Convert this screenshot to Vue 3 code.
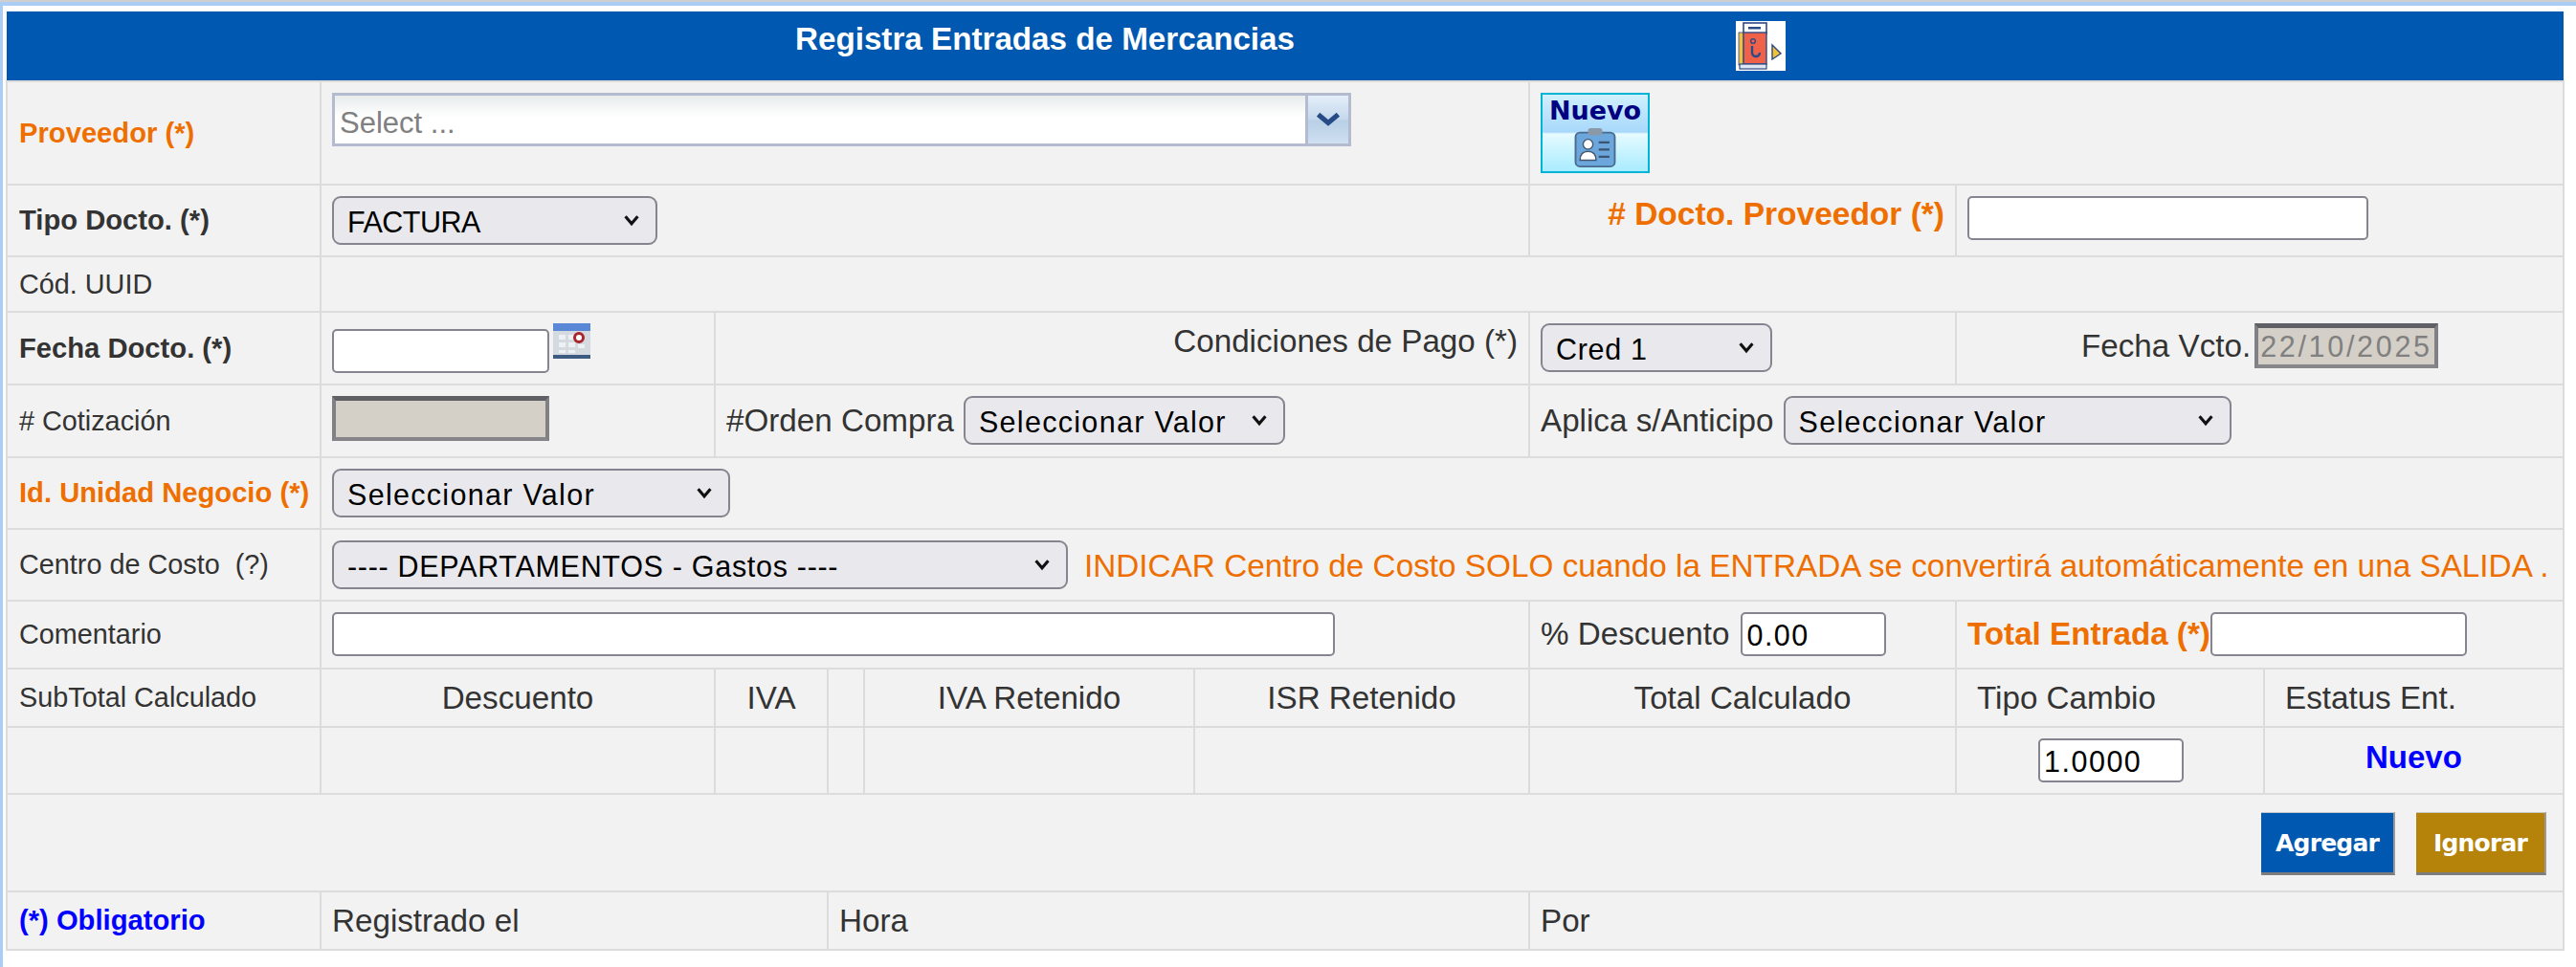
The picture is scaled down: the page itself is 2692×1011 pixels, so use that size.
<script setup>
const cols = [328, 412, 118, 38, 345, 350, 446, 322, 313]
</script>

<template>
  <div class="page">
    <div class="header">
      <span class="title">Registra Entradas de Mercancias</span>
      <svg class="doc-icon" viewBox="0 0 52 52" width="52" height="52">
        <rect width="52" height="52" fill="#fff" />
        <rect x="8" y="2" width="24" height="11" fill="#fff" stroke="#2b4a86" stroke-width="1.6" />
        <rect x="13" y="6" width="13" height="2.5" fill="#2b4a86" />
        <rect x="3" y="12" width="5" height="34" fill="#f0c040" stroke="#2b4a86" stroke-width="0.8" />
        <rect x="8" y="12" width="24" height="33" fill="#f0614a" stroke="#2b4a86" stroke-width="1.4" />
        <circle cx="18" cy="21" r="2.4" fill="none" stroke="#2b4a86" stroke-width="1.4" />
        <path d="M17 26v7a4 4 0 0 0 8 0" fill="none" stroke="#2b4a86" stroke-width="2.4" />
        <rect x="4" y="45" width="28" height="5" fill="#dfe6f2" stroke="#2b4a86" stroke-width="1.2" />
        <path d="M38 25l9 9-9 6z" fill="#f1c232" stroke="#2b4a86" stroke-width="1.4" />
      </svg>
    </div>
    <table class="form">
      <colgroup>
        <col v-for="(w, i) in cols" :key="i" :style="{ width: w + 'px' }" />
      </colgroup>
      <tbody>
        <tr class="r1">
          <td class="label bold orange">Proveedor (*)</td>
          <td colspan="5" class="top">
            <div class="combo">
              <input class="combo-input" placeholder="Select ..." />
              <span class="combo-btn">
                <svg viewBox="0 0 30 20" width="26" height="18"><path d="M3 4l12 10L27 4" fill="none" stroke="#264b86" stroke-width="6" /></svg>
              </span>
            </div>
          </td>
          <td colspan="3" class="top">
            <button class="new-btn">
              <span>Nuevo</span>
              <svg viewBox="0 0 48 44" width="46" height="41">
                <rect x="2" y="5" width="44" height="38" rx="5" fill="#6ba6dc" stroke="#4a6a8c" stroke-width="2" />
                <rect x="16" y="0" width="16" height="8" rx="3" fill="#8a99a8" />
                <circle cx="16" cy="18" r="5.5" fill="#fff" stroke="#44586e" stroke-width="1.5" />
                <path d="M7 36c0-8 4-10 9-10s9 2 9 10z" fill="#fff" stroke="#44586e" stroke-width="1.5" />
                <path d="M28 16h12M28 24h12M28 32h12" stroke="#3b5570" stroke-width="2.4" />
              </svg>
            </button>
          </td>
        </tr>
        <tr class="r2">
          <td class="label bold dark">Tipo Docto. (*)</td>
          <td colspan="5" class="top">
            <div class="sel w-factura"><select><option>FACTURA</option></select><svg class="chev" viewBox="0 0 14 10"><path d="M2 2l5 6 5-6" /></svg></div>
          </td>
          <td class="big-label"><span class="bold orange big">#&nbsp;Docto. Proveedor (*)</span></td>
          <td colspan="2" class="top"><input class="txt w-docto" /></td>
        </tr>
        <tr class="r3">
          <td class="label">Cód. UUID</td>
          <td colspan="8"></td>
        </tr>
        <tr class="r4">
          <td class="label bold dark">Fecha Docto. (*)</td>
          <td class="top">
            <div class="inline fecha">
              <input class="txt w-fecha" />
              <svg class="cal" viewBox="0 0 39 37" width="39" height="37">
                <rect width="39" height="37" fill="#d5dae1" />
                <rect width="39" height="8" fill="#5a88d6" />
                <rect y="33" width="39" height="4" fill="#3d5a80" />
                <path d="M6 12h7v5H6zM16 12h7v5h-7zM6 20h7v5H6zM16 20h7v5h-7zM26 22h7v4h-7zM6 28h7v3H6zM16 28h7v3h-7z" fill="#eef1f4" />
                <circle cx="27" cy="15" r="4.5" fill="#fff" stroke="#a8262c" stroke-width="3" />
              </svg>
            </div>
          </td>
          <td colspan="4" class="right-text"><span class="cond">Condiciones de Pago (*)</span></td>
          <td class="top">
            <div class="sel w-cred"><select><option>Cred 1</option></select><svg class="chev" viewBox="0 0 14 10"><path d="M2 2l5 6 5-6" /></svg></div>
          </td>
          <td colspan="2" class="top">
            <div class="inline venc"><span class="reg">Fecha Vcto.</span><input class="ro w-venc" value="22/10/2025" disabled /></div>
          </td>
        </tr>
        <tr class="r5">
          <td class="label">#&nbsp;Cotización</td>
          <td class="top"><input class="ro w-fecha" disabled /></td>
          <td colspan="4" class="top">
            <div class="inline gap"><span class="reg">#Orden Compra</span><div class="sel wide w-orden"><select><option>Seleccionar Valor</option></select><svg class="chev" viewBox="0 0 14 10"><path d="M2 2l5 6 5-6" /></svg></div></div>
          </td>
          <td colspan="3" class="top">
            <div class="inline gap"><span class="reg">Aplica s/Anticipo</span><div class="sel wide w-aplica"><select><option>Seleccionar Valor</option></select><svg class="chev" viewBox="0 0 14 10"><path d="M2 2l5 6 5-6" /></svg></div></div>
          </td>
        </tr>
        <tr class="r6">
          <td class="label bold orange">Id. Unidad Negocio (*)</td>
          <td colspan="8" class="top">
            <div class="sel wide w-unidad"><select><option>Seleccionar Valor</option></select><svg class="chev" viewBox="0 0 14 10"><path d="M2 2l5 6 5-6" /></svg></div>
          </td>
        </tr>
        <tr class="r7">
          <td class="label">Centro de Costo&nbsp; (?)</td>
          <td colspan="8" class="top">
            <div class="inline gap-msg">
              <div class="sel w-centro"><select><option>---- DEPARTAMENTOS - Gastos ----</option></select><svg class="chev" viewBox="0 0 14 10"><path d="M2 2l5 6 5-6" /></svg></div>
              <span class="msg">INDICAR Centro de Costo SOLO cuando la ENTRADA se convertirá automáticamente en una SALIDA .</span>
            </div>
          </td>
        </tr>
        <tr class="r8">
          <td class="label">Comentario</td>
          <td colspan="5" class="top"><input class="txt w-coment" /></td>
          <td class="top"><div class="inline gap-d"><span class="reg">% Descuento</span><input class="txt w-desc" value="0.00" /></div></td>
          <td colspan="2" class="top"><div class="inline"><span class="bold orange big">Total Entrada (*)</span><input class="txt w-total" /></div></td>
        </tr>
        <tr class="r9">
          <td class="label">SubTotal Calculado</td>
          <td class="c reg">Descuento</td>
          <td class="c reg">IVA</td>
          <td></td>
          <td class="c reg">IVA Retenido</td>
          <td class="c reg">ISR Retenido</td>
          <td class="c reg">Total Calculado</td>
          <td class="reg p20">Tipo Cambio</td>
          <td class="reg p20">Estatus Ent.</td>
        </tr>
        <tr class="r10">
          <td></td>
          <td></td>
          <td></td>
          <td></td>
          <td></td>
          <td></td>
          <td></td>
          <td class="top"><input class="txt w-cambio" value="1.0000" /></td>
          <td class="status">Nuevo</td>
        </tr>
        <tr class="r11">
          <td colspan="9" class="actions">
            <div class="btns">
              <button class="act blue-btn">Agregar</button>
              <button class="act gold-btn">Ignorar</button>
            </div>
          </td>
        </tr>
        <tr class="r12">
          <td class="label bold blue">(*) Obligatorio</td>
          <td colspan="2" class="reg">Registrado el</td>
          <td colspan="3" class="reg">Hora</td>
          <td colspan="3" class="reg">Por</td>
        </tr>
      </tbody>
    </table>
  </div>
</template>

<style>
html, body { margin: 0; background: #fff; }
</style>

<style scoped>
.page {
  width: 2692px;
  height: 1011px;
  box-sizing: border-box;
  padding: 12px 0 0 6px;
  background: #fff;
  font-family: "Liberation Sans", Arial, sans-serif;
  color: #333;
  overflow: hidden;
  box-shadow: inset 0 2px 0 #cfcfcf, inset 0 6px 0 #a9cdf5, inset 3px 0 0 #a9cdf5;
}
.header {
  width: 2672px;
  height: 72px;
  margin-left: 1px;
  background: #0058b0;
  display: flex;
  align-items: flex-start;
  padding-left: 824px;
  box-sizing: border-box;
}
.title {
  color: #fff;
  font-weight: bold;
  font-size: 33.2px;
  line-height: 58px;
  width: 983px;
  flex: none;
}
.doc-icon { margin-top: 10px; }
.form {
  table-layout: fixed;
  width: 2672px;
  border-collapse: collapse;
  background: #f2f2f2;
}
td {
  border: 2px solid #dcdcdc;
  padding: 0 0 0 11px;
  font-size: 33.2px;
  color: #333;
  vertical-align: middle;
  white-space: nowrap;
  overflow: hidden;
}
td.top { vertical-align: top; padding-top: 11px; }
.r1 { height: 108px; }
.r2 { height: 75px; }
.r3 { height: 58px; }
.r4 { height: 76px; }
.r5 { height: 76px; }
.r6 { height: 75px; }
.r7 { height: 75px; }
.r8 { height: 71px; }
.r9 { height: 61px; }
.r10 { height: 70px; }
.r11 { height: 102px; }
.r12 { height: 61px; }
td.label { font-size: 28.8px; padding-left: 12px; }
td.label.bold { font-size: 29.2px; }
.bold { font-weight: bold; }
.orange { color: #ee6f00; }
.dark { color: #333; }
.blue { color: #0000ff; }
.big { font-size: 33.2px; }
.big-label .big { font-size: 33.5px; }
.reg { font-size: 33.2px; }
.c { text-align: center; padding-left: 0; }
.p20 { padding-left: 21px; }
.big-label { text-align: right; padding: 0 11px 14px 0; }
.right-text { text-align: right; padding: 0 11px 14px 0; }
.inline { display: flex; align-items: center; }
.gap { gap: 10px; }
.gap-d { gap: 12px; }
.gap-msg { gap: 17px; }
.fecha { align-items: flex-start; }
.fecha .w-fecha { margin-top: 6px; }
.cal { margin-left: 4px; }
.venc { padding-left: 119px; gap: 4px; }
.sel { position: relative; height: 51px; box-sizing: border-box; flex: none; }
.sel select {
  appearance: none;
  width: 100%;
  height: 100%;
  box-sizing: border-box;
  border: 2px solid #85858f;
  border-radius: 9px;
  background: #e9e9ed;
  color: #000;
  font: 30.5px "Liberation Sans", Arial, sans-serif;
  letter-spacing: 0.7px;
  padding: 2px 14px 0;
  display: block;
}
.w-factura select { letter-spacing: -0.5px; }
.wide select { letter-spacing: 1.3px; }
.chev {
  position: absolute;
  right: 18px;
  top: 18px;
  width: 18px;
  height: 14px;
  fill: none;
  stroke: #111;
  stroke-width: 2.4;
}
.w-factura { width: 340px; }
.w-cred { width: 242px; }
.w-orden { width: 336px; }
.w-aplica { width: 468px; }
.w-unidad { width: 416px; }
.w-centro { width: 769px; }
.txt {
  display: block;
  box-sizing: border-box;
  height: 46px;
  border: 2px solid #85858f;
  border-radius: 5px;
  background: #fff;
  color: #000;
  font: 30.5px "Liberation Sans", Arial, sans-serif;
  letter-spacing: 1.5px;
  padding: 2px 4px 0;
  flex: none;
}
.w-docto { width: 419px; }
.w-fecha { width: 227px; }
.w-coment { width: 1048px; }
.w-desc { width: 152px; }
.w-total { width: 268px; }
.w-cambio { width: 152px; margin-left: 74px; }
.ro {
  display: block;
  box-sizing: border-box;
  height: 47px;
  border-style: solid;
  border-width: 5px 4px 4px;
  border-color: #5f5f66 #808085 #85858a;
  background: #d4d0c8;
  color: #808080;
  font: 30.5px "Liberation Sans", Arial, sans-serif;
  letter-spacing: 2.7px;
  padding: 0 2px;
  flex: none;
  opacity: 1;
}
.w-venc { width: 192px; }
.msg { color: #ee6f00; font-size: 33.3px; padding-top: 2px; }
.status { color: #0000ff; font-weight: bold; font-size: 33px; padding: 0 0 6px 105px; }
.actions { vertical-align: top; padding-top: 18px; }
.btns { display: flex; justify-content: flex-end; gap: 22px; padding-right: 17px; }
.act {
  height: 66px;
  border: 0;
  border-top: 1px solid #c8c8c8;
  border-right: 2px solid #9a9a9a;
  border-bottom: 3px solid #7d7d7d;
  color: #fff;
  font: bold 25px "DejaVu Sans", Verdana, sans-serif;
  letter-spacing: -0.8px;
  padding: 0;
}
.blue-btn { width: 140px; background: #0058b0; }
.gold-btn { width: 136px; background: #b5820a; }
.combo { display: flex; width: 1065px; height: 56px; border: 3px solid #b4bbce; box-sizing: border-box; }
.combo-input {
  flex: 1;
  min-width: 0;
  border: 0;
  border-right: 3px solid #b4bbce;
  background: linear-gradient(#e8ecec, #fff 45%);
  font: 31px "Liberation Sans", Arial, sans-serif;
  padding: 8px 5px 0;
  outline: 0;
}
.combo-input::placeholder { color: #808080; }
.combo-btn {
  width: 42px;
  flex: none;
  display: flex;
  align-items: center;
  justify-content: center;
  background: linear-gradient(#e4eef9, #c4d8ec 50%, #b8cfe6 52%, #cfe0f1);
}
.new-btn {
  width: 114px;
  height: 84px;
  box-sizing: border-box;
  border: 2px solid #00b4d8;
  background: linear-gradient(#d0f0ff, #a8d8fb 49%, #e6fbff 51%, #a8ecff);
  padding: 0;
  color: #000080;
  font: bold 27px "DejaVu Sans", Verdana, sans-serif;
  display: flex;
  flex-direction: column;
  align-items: center;
  line-height: 34px;
}
.new-btn svg { margin-top: 1px; }
</style>
